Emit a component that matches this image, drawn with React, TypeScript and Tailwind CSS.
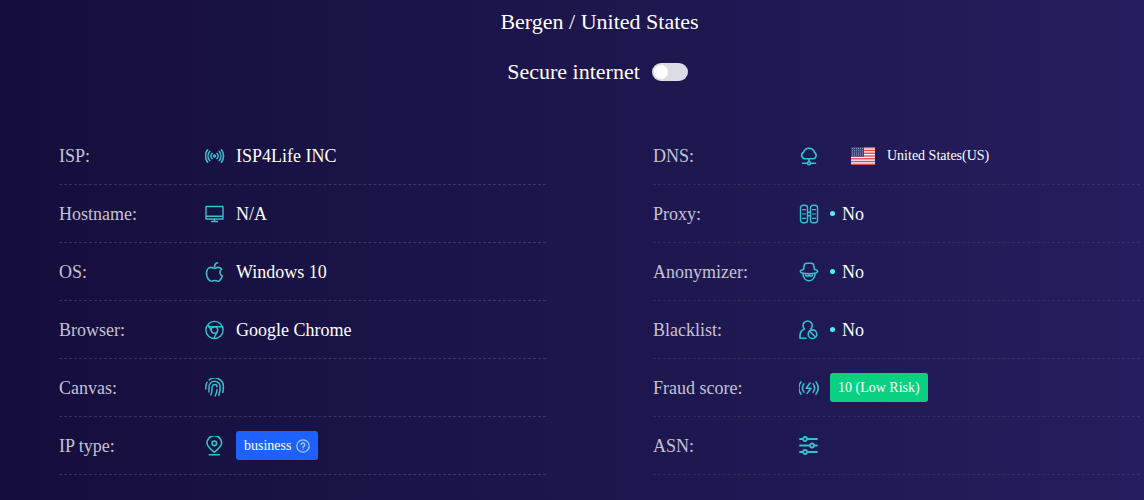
import React, { useState } from 'react';

interface InfoRow {
    label: string;
    icon: React.ReactNode;
    value?: React.ReactNode;
}

function Icon({ children }: { children: React.ReactNode }) {
    return (
        <svg
            viewBox="0 0 20 20"
            className="h-5 w-5 shrink-0"
            fill="none"
            stroke="currentColor"
            strokeWidth="1.6"
            strokeLinecap="round"
            strokeLinejoin="round"
            aria-hidden="true"
        >
            {children}
        </svg>
    );
}

const SignalIcon = () => (
    <Icon>
        <circle cx="9.5" cy="10" r="1.7" fill="currentColor" stroke="none" />
        <path d="M7 7.4a4 4 0 0 0 0 5.2M12 7.4a4 4 0 0 1 0 5.2M4.7 5.4a7.2 7.2 0 0 0 0 9.2M14.3 5.4a7.2 7.2 0 0 1 0 9.2M2.6 3.8a10 10 0 0 0 0 12.4M16.4 3.8a10 10 0 0 1 0 12.4" />
    </Icon>
);

const MonitorIcon = () => (
    <Icon>
        <path d="M1 2.5h17v12.500H1zM1 12.300h17M9.500 15v2.400M6.500 17.500h6" strokeWidth="1.4" />
    </Icon>
);

const AppleIcon = () => (
    <Icon>
        <path d="M9.500 6.400c1.200-.2 2.100-1 3.500-1 1.500 0 2.800.7 3.600 1.800-2.500 1.900-2.200 5.200.6 6.800-.8 2.500-2.300 5.200-4.300 5.200-1.300 0-1.900-.7-3.200-.7s-2 .7-3.300.7C3.900 19.200 1.500 15.200 1.500 11.500c0-3.700 2.100-6.100 4.600-6.100 1.400 0 2.300.8 3.400 1z" />
        <path d="M9.600 4.800c-.1-2 1-3.500 2.900-4" />
    </Icon>
);

const ChromeIcon = () => (
    <Icon>
        <g strokeWidth="1.4">
            <circle cx="9.5" cy="10" r="8.6" />
            <circle cx="9.5" cy="10" r="3.2" />
            <path d="M3.5 6.700h14M6.800 11.700 3.500 5.400M12.300 11.600 8.900 18.300" />
        </g>
    </Icon>
);

const FingerprintIcon = () => (
    <Icon>
        <g strokeWidth="1.5">
            <path d="M.8 11V8.500c0-1.500.4-2.900 1.200-4.100M4.100 2a8.700 8.700 0 0 1 14.300 6.500c0 2.300-.1 4-.6 5.800" />
            <path d="M3.800 14c.4-1.800.3-3.500.3-5.400a5.500 5.500 0 0 1 5.500-5.400c3.100 0 5.500 2.400 5.500 5.400 0 3-.2 6-1.300 9" />
            <path d="M5.900 17c1.300-2.600 1.200-5.200 1.200-8a2.500 2.500 0 0 1 2.500-2.600c1.500 0 2.500 1.100 2.500 2.500M12.100 11.500c-.3 2.500-.9 4.400-1.900 6.400" />
        </g>
    </Icon>
);

const PinIcon = () => (
    <Icon>
        <path d="M9.300 16.200C5.500 13.200 2 10.500 2 7a7.300 7.300 0 0 1 14.600 0c0 3.500-3.500 6.200-7.300 9.200z" />
        <circle cx="9.3" cy="7.3" r="2.3" />
        <path d="M4.300 18.700h10" />
    </Icon>
);

const CloudDnsIcon = () => (
    <Icon>
        <path d="M5.800 12.800a3.500 3.500 0 0 1-1.300-6.500 5.700 5.700 0 0 1 11 .2 3.400 3.400 0 0 1-1.300 6.300zM10 12.800v3M3.500 17.200h4.400M12.100 17.200h4.400" />
        <circle cx="10" cy="17.2" r="1.5" />
    </Icon>
);

const ServerIcon = () => (
    <Icon>
        <g strokeWidth="1.4">
            <rect x="1.5" y="1.2" width="7" height="17.6" rx="2.6" />
            <rect x="11.5" y="1.2" width="7" height="17.6" rx="2.6" />
            <path d="M8.500 8.200h3M8.500 11.800h3" />
        </g>
        <path d="M3.500 5.700h3M3.500 10h3M3.500 14.300h3M13.500 5.700h3M13.500 10h3M13.500 14.300h3" strokeWidth="1.2" />
    </Icon>
);

const HatIcon = () => (
    <Icon>
        <path d="M4.500 7.500 5.200 3.500c.2-1.300 1.100-2.200 2.400-2.200h4.800c1.300 0 2.200.9 2.400 2.200l.7 4c2 .4 3.200 1.100 3.200 2 0 1.400-3.800 2.200-8.700 2.200s-8.700-.8-8.700-2.200c0-.9 1.200-1.600 3.200-2z" />
        <path d="M3.900 11.800c.4 4 2.900 7 6.100 7s5.700-3 6.100-7M6.500 12.900c.8 1.700 2.800 1.600 3.500 0 .7 1.600 2.700 1.700 3.500 0" />
    </Icon>
);

const BlockedUserIcon = () => (
    <Icon>
        <path d="M11.800 9a4.600 4.600 0 1 0-6.300 0C2.500 10.200 1 12.500 1 15.500v2.700h6" />
        <circle cx="13.5" cy="14.2" r="4.3" />
        <path d="m10.700 11.300 5.700 5.700" />
    </Icon>
);

const FraudIcon = () => (
    <Icon>
        <path d="M4.900 5.900a7 7 0 0 0 0 8.200M14.100 5.900a7 7 0 0 1 0 8.200M2 3.900a10.500 10.500 0 0 0 0 12.200M17 3.900a10.500 10.500 0 0 1 0 12.200M11 5 7.200 10.200H12L8.200 15.400" />
    </Icon>
);

const SlidersIcon = () => (
    <Icon>
        <g strokeWidth="1.8">
            <circle cx="6" cy="3" r="2" />
            <circle cx="13" cy="9.5" r="2" />
            <circle cx="6" cy="16" r="2" />
            <path d="M1 3h3M8 3h10M1 9.500h10M15 9.500h3M1 16h3M8 16h10" />
        </g>
    </Icon>
);

const HelpIcon = () => (
    <svg
        viewBox="0 0 14 14"
        className="h-3.5 w-3.5 text-[#a9c4ff]"
        fill="none"
        stroke="currentColor"
        strokeWidth="1.3"
        strokeLinecap="round"
        aria-hidden="true"
    >
        <circle cx="7" cy="7" r="6.2" />
        <path d="M5.200 5.600a1.800 1.800 0 1 1 2.700 1.600c-.6.300-.9.600-.9 1.200M7 10.200v.1" />
    </svg>
);

const stripes = [0, 2, 4, 6, 8, 10, 12];
const starRows = [1.5, 3.7, 5.9, 8.1];
const starCols = [1.5, 3.5, 5.5, 7.5, 9.5, 11.5];

const UsFlag = () => (
    <svg viewBox="0 0 24 18" className="h-[18px] w-6" role="img" aria-label="US">
        <rect width="24" height="18" fill="#f7f1f3" />
        {stripes.map(i => (
            <rect key={i} y={(i * 18) / 13} width="24" height={18 / 13} fill="#dc4a55" />
        ))}
        <rect width="13" height="9.7" fill="#34467c" />
        {starRows.map(y =>
            starCols.map(x => <circle key={`${x}-${y}`} cx={x} cy={y} r="0.5" fill="#a9bcd2" />)
        )}
    </svg>
);

const StatusNo = () => (
    <span className="flex items-center gap-[7px]">
        <span className="h-[5px] w-[5px] rounded-full bg-[#4df0fb]" />
        No
    </span>
);

const leftRows: InfoRow[] = [
    { label: 'ISP:', icon: <SignalIcon />, value: 'ISP4Life INC' },
    { label: 'Hostname:', icon: <MonitorIcon />, value: 'N/A' },
    { label: 'OS:', icon: <AppleIcon />, value: 'Windows 10' },
    { label: 'Browser:', icon: <ChromeIcon />, value: 'Google Chrome' },
    { label: 'Canvas:', icon: <FingerprintIcon /> },
    {
        label: 'IP type:',
        icon: <PinIcon />,
        value: (
            <span className="flex h-[29px] items-center gap-[5px] rounded-[3px] bg-[#1d62ff] px-2 text-sm">
                business <HelpIcon />
            </span>
        )
    }
];

const rightRows: InfoRow[] = [
    {
        label: 'DNS:',
        icon: <CloudDnsIcon />,
        value: (
            <span className="flex items-center gap-3 pl-[21px] text-sm">
                <UsFlag /> United States(US)
            </span>
        )
    },
    { label: 'Proxy:', icon: <ServerIcon />, value: <StatusNo /> },
    { label: 'Anonymizer:', icon: <HatIcon />, value: <StatusNo /> },
    { label: 'Blacklist:', icon: <BlockedUserIcon />, value: <StatusNo /> },
    {
        label: 'Fraud score:',
        icon: <FraudIcon />,
        value: (
            <span className="flex h-[29px] items-center rounded-[3px] bg-[#0ad182] px-2 text-sm">
                10 (Low Risk)
            </span>
        )
    },
    { label: 'ASN:', icon: <SlidersIcon /> }
];

function InfoList({ rows, border }: { rows: InfoRow[]; border: string }) {
    return (
        <dl>
            {rows.map(row => (
                <div key={row.label} className={`flex h-[58px] items-center border-b border-dashed ${border}`}>
                    <dt className="w-[146px] shrink-0 text-[#c5c1d6]">{row.label}</dt>
                    <dd className="flex items-center gap-[11px]">
                        <span className="text-[#38bfcc]">{row.icon}</span>
                        {row.value}
                    </dd>
                </div>
            ))}
        </dl>
    );
}

export default function App() {
    const [secure, setSecure] = useState(false);

    return (
        <div className="min-h-screen bg-linear-to-r from-[#150e3c] to-[#241e5e] pr-1 pl-[59px] font-['Liberation_Serif','Times_New_Roman',serif] text-lg text-white">
            {/* Location */}
            <header className="flex flex-col items-center pt-1 text-[22px] leading-9">
                <h1>Bergen / United States</h1>
                <label className="mt-3.5 mr-1 flex cursor-pointer items-center gap-3">
                    Secure internet
                    <input
                        type="checkbox"
                        role="switch"
                        checked={secure}
                        onChange={e => setSecure(e.target.checked)}
                        className="peer sr-only"
                    />
                    <span className="flex h-[18px] w-9 items-center rounded-full bg-[#dcdce4] px-0.5 peer-checked:justify-end peer-checked:bg-[#0ad182]">
                        <span className="h-3.5 w-3.5 rounded-full bg-white" />
                    </span>
                </label>
            </header>

            {/* Connection details */}
            <main className="mt-[37px] grid grid-cols-2 gap-[107px]">
                <InfoList rows={leftRows} border="border-white/15" />
                <InfoList rows={rightRows} border="border-white/8" />
            </main>
        </div>
    );
}
